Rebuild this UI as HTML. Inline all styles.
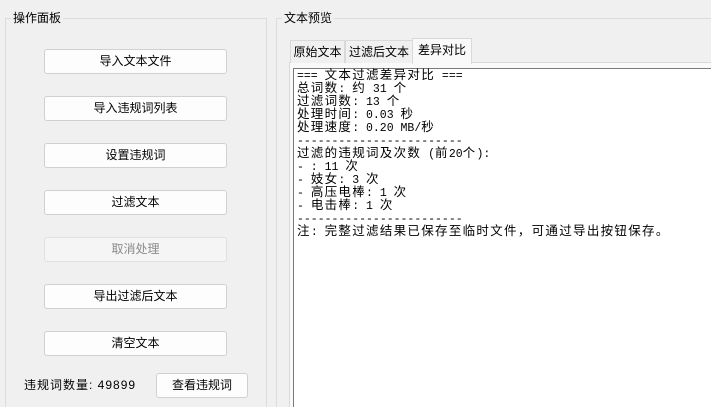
<!DOCTYPE html>
<html><head><meta charset="utf-8"><style>
html,body{margin:0;width:711px;height:407px;overflow:hidden}
body{background:#f0f0f0;position:relative;font-family:"Liberation Sans","Noto Sans CJK SC",sans-serif;font-size:12px;color:#000}
.abs{position:absolute}
.grp{position:absolute;border:1px solid #dcdcdc}
.lbl{position:absolute;background:#f0f0f0;padding:0 2px;font-size:12px;line-height:14px}
.btn{position:absolute;left:44px;width:181px;height:23px;background:#fdfdfd;border:1px solid #d0d0d0;border-radius:3px;text-align:center;line-height:23px;font-size:12px}
.dis{background:#f5f5f5;color:#8a8a8a;border-color:#e0e0e0}
.tab{position:absolute;top:40px;height:22px;line-height:22px;font-size:12px;text-align:center;border:1px solid #d9d9d9;border-bottom:none;background:#f0f0f0}
pre{margin:0;font-family:"Liberation Mono","Noto Sans CJK SC",monospace;font-size:11.5px;line-height:13px}
.c{font-size:12.5px;letter-spacing:1.3px}
</style></head><body>
<div class="grp" style="left:5px;top:18px;width:260px;height:400px"></div>
<div class="lbl" style="left:11px;top:11px">操作面板</div>
<div class="grp" style="left:276px;top:18px;width:450px;height:400px"></div>
<div class="lbl" style="left:282px;top:11px">文本预览</div>
<div class="btn" style="top:49px">导入文本文件</div>
<div class="btn" style="top:96px">导入违规词列表</div>
<div class="btn" style="top:143px">设置违规词</div>
<div class="btn" style="top:190px">过滤文本</div>
<div class="btn dis" style="top:237px">取消处理</div>
<div class="btn" style="top:284px">导出过滤后文本</div>
<div class="btn" style="top:331px">清空文本</div>
<div class="abs" style="left:24px;top:377px;line-height:16px;letter-spacing:1px">违规词数量: 49899</div>
<div class="btn" style="left:156px;top:373px;width:90px">查看违规词</div>
<div class="abs" style="left:289px;top:62px;width:430px;height:350px;border:1px solid #d9d9d9;background:#f9f9f9"></div>
<div class="tab" style="left:290px;width:53px">原始文本</div>
<div class="tab" style="left:345px;width:66px">过滤后文本</div>
<div class="tab" style="left:412px;top:38px;height:25px;width:58px;background:#f9f9f9;line-height:22px">差异对比</div>
<div class="abs" style="left:293px;top:68px;width:420px;height:345px;border:1px solid #7a7a7a;background:#fff"></div>
<pre class="abs" style="left:297px;top:70px">=== <span class="c">文本过滤差异对比</span> ===
<span class="c">总词数</span>: <span class="c">约</span> 31 <span class="c">个</span>
<span class="c">过滤词数</span>: 13 <span class="c">个</span>
<span class="c">处理时间</span>: 0.03 <span class="c">秒</span>
<span class="c">处理速度</span>: 0.20 MB/<span class="c">秒</span>
------------------------
<span class="c">过滤的违规词及次数</span> (<span class="c">前</span>20<span class="c">个</span>):
- : 11 <span class="c">次</span>
- <span class="c">妓女</span>: 3 <span class="c">次</span>
- <span class="c">高压电棒</span>: 1 <span class="c">次</span>
- <span class="c">电击棒</span>: 1 <span class="c">次</span>
------------------------
<span class="c">注</span>: <span class="c">完整过滤结果已保存至临时文件，可通过导出按钮保存。</span></pre>
</body></html>
